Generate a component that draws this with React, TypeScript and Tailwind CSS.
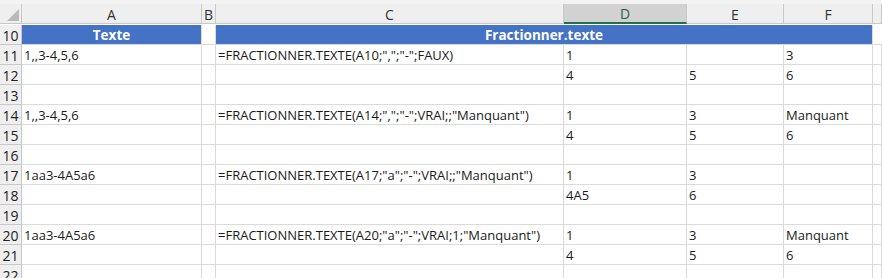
import React from "react";

const COLS = [
  { key: "A", w: 180 },
  { key: "B", w: 14 },
  { key: "C", w: 348 },
  { key: "D", w: 123 },
  { key: "E", w: 97 },
  { key: "F", w: 89 },
  { key: "G", w: 9 },
];

type Row = { n: number; cells: Record<string, string> };

const ROWS: Row[] = [
  { n: 11, cells: { A: "1,,3-4,5,6", C: '=FRACTIONNER.TEXTE(A10;",";"-";FAUX)', D: "1", F: "3" } },
  { n: 12, cells: { D: "4", E: "5", F: "6" } },
  { n: 13, cells: {} },
  { n: 14, cells: { A: "1,,3-4,5,6", C: '=FRACTIONNER.TEXTE(A14;",";"-";VRAI;;"Manquant")', D: "1", E: "3", F: "Manquant" } },
  { n: 15, cells: { D: "4", E: "5", F: "6" } },
  { n: 16, cells: {} },
  { n: 17, cells: { A: "1aa3-4A5a6", C: '=FRACTIONNER.TEXTE(A17;"a";"-";VRAI;;"Manquant")', D: "1", E: "3" } },
  { n: 18, cells: { D: "4A5", E: "6" } },
  { n: 19, cells: {} },
  { n: 20, cells: { A: "1aa3-4A5a6", C: '=FRACTIONNER.TEXTE(A20;"a";"-";VRAI;1;"Manquant")', D: "1", E: "3", F: "Manquant" } },
  { n: 21, cells: { D: "4", E: "5", F: "6" } },
  { n: 22, cells: {} },
];

const font = { fontFamily: '"Open Sans", "Liberation Sans", sans-serif' };

function Corner() {
  return (
    <div className="relative h-[20px] w-[22px] shrink-0 border-r border-b border-[#c8c8c8] bg-[#efefef]">
      <svg className="absolute right-[2px] bottom-[2px]" width="12" height="12" viewBox="0 0 12 12">
        <polygon points="12,0 12,12 0,12" fill="#b9b9b9" />
      </svg>
    </div>
  );
}

function ColHeader({ label, w, selected }: { label: string; w: number; selected?: boolean }) {
  if (selected) {
    return (
      <div
        style={{ width: w }}
        className="flex h-[20px] shrink-0 items-center justify-center border-r border-[#c8c8c8] border-b-2 border-b-[#217346] bg-[#d2d2d2] pt-[1px] text-[14px] text-[#2e5e3f]"
      >
        {label}
      </div>
    );
  }
  return (
    <div
      style={{ width: w }}
      className="flex h-[20px] shrink-0 items-center justify-center border-r border-b border-[#c8c8c8] bg-[#efefef] pt-[1px] text-[14px] text-[#333]"
    >
      {label}
    </div>
  );
}

function RowNumber({ n }: { n: number }) {
  return (
    <div className="flex w-[22px] shrink-0 items-center justify-center border-r border-b border-[#c8c8c8] bg-[#efefef] pt-[2px] text-[14px] text-[#222]">
      {n}
    </div>
  );
}

export default function App() {
  return (
    <div className="h-[278px] w-[882px] overflow-hidden bg-white text-[#1a1a1a]" style={font}>
      {/* strip above the column headers */}
      <div className="h-[4px] bg-[#f3f3f3]" />
      {/* column headers */}
      <div className="flex">
        <Corner />
        <ColHeader label="A" w={180} />
        <ColHeader label="B" w={14} />
        <ColHeader label="C" w={348} />
        <ColHeader label="D" w={123} selected />
        <ColHeader label="E" w={97} />
        <ColHeader label="F" w={89} />
        <ColHeader label="" w={9} />
      </div>
      <div className="h-px bg-white" />

      {/* row 10: table headings */}
      <div className="flex h-[20px]">
        <RowNumber n={10} />
        <div className="flex w-[180px] shrink-0 items-center justify-center border-r border-b border-[#dadada] bg-[#4472c4] pt-[2px] text-[13.5px] font-bold text-white">
          Texte
        </div>
        <div className="w-[14px] shrink-0 border-r border-b border-[#dadada] bg-white" />
        <div className="flex w-[657px] shrink-0 items-center justify-center border-r border-b border-[#dadada] bg-[#4472c4] pt-[2px] text-[13.5px] font-bold text-white">
          Fractionner.texte
        </div>
        <div className="w-[9px] shrink-0 border-b border-[#dadada]" />
      </div>

      {ROWS.map((r) => (
        <div key={r.n} className="flex h-[20px]">
          <RowNumber n={r.n} />
          {COLS.map((c) => (
            <div
              key={c.key}
              style={{ width: c.w }}
              className="flex shrink-0 items-center overflow-visible whitespace-nowrap border-r border-b border-[#dadada] pt-[2px] pl-[2px] text-[13px]"
            >
              {r.cells[c.key] ?? ""}
            </div>
          ))}
        </div>
      ))}
    </div>
  );
}
